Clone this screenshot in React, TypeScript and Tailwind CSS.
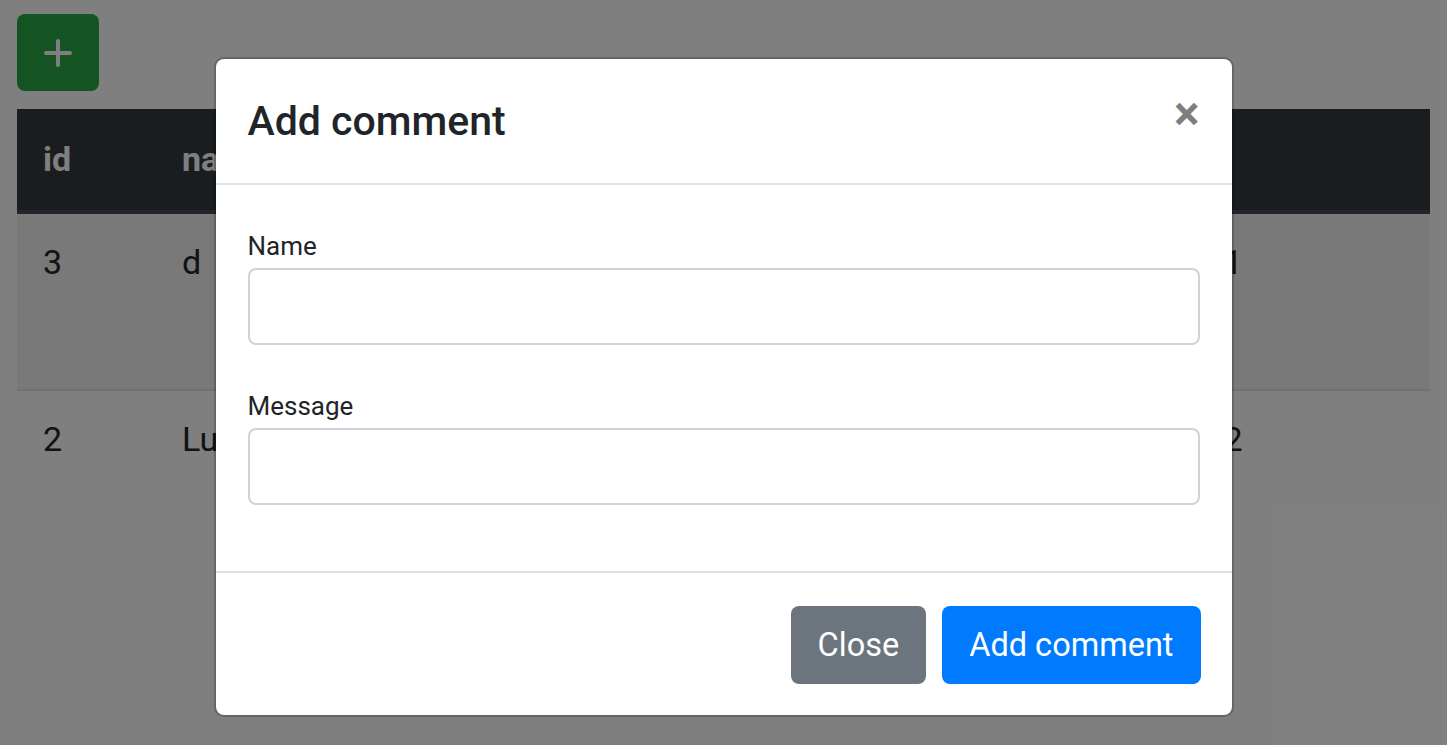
import React from "react";

const rows = [
  { id: 3, name: "d", message: "d", date: "Jan 1", striped: true },
  { id: 2, name: "Lucas", message: "hello", date: "Jan 2", striped: false },
];

export default function App() {
  return (
    <div className="relative min-h-[745px] bg-white font-['Roboto','Liberation_Sans',sans-serif] text-[#212529]">
      <div className="px-[17px] pt-[14px]">
        <button className="flex h-[77px] w-[82px] items-center justify-center rounded-[8px] bg-[#28a745]">
          <svg width="28" height="28" viewBox="0 0 28 28">
            <path d="M14 2v24M2 14h24" stroke="white" strokeWidth="4" strokeLinecap="round" fill="none" />
          </svg>
        </button>

        <table className="mt-[18px] w-full table-fixed border-collapse text-left">
          <thead>
            <tr className="bg-[#343a40] text-white">
              <th className="h-[103px] w-[139px] border-b-[4px] border-[#454d55] px-[26px] text-[34px] font-bold">id</th>
              <th className="w-[320px] border-b-[4px] border-[#454d55] px-[26px] text-[34px] font-bold">name</th>
              <th className="border-b-[4px] border-[#454d55] px-[26px] text-[34px] font-bold">message</th>
              <th className="w-[297px] border-b-[4px] border-[#454d55] px-[26px] text-[34px] font-bold">date</th>
            </tr>
          </thead>
          <tbody>
            {rows.map((r) => (
              <tr
                key={r.id}
                className={r.striped ? "h-[178px] bg-black/5" : "h-[98px] border-t-2 border-[#dee2e6]"}
              >
                <td className="px-[26px] pt-[24px] align-top text-[34px] leading-[48px]">{r.id}</td>
                <td className="px-[26px] pt-[24px] align-top text-[34px] leading-[48px]">{r.name}</td>
                <td className="px-[26px] pt-[24px] align-top text-[34px] leading-[48px]">{r.message}</td>
                <td className="whitespace-nowrap px-[26px] pt-[24px] align-top text-[34px] leading-[48px]">{r.date}</td>
              </tr>
            ))}
          </tbody>
        </table>
      </div>

      {/* modal backdrop */}
      <div className="absolute inset-0 flex justify-center bg-black/50 pt-[57px]">
        <div className="h-fit w-[1020px] rounded-[10px] border-2 border-black/20 bg-white bg-clip-padding">
          <div className="flex items-start justify-between border-b-2 border-[#dee2e6] p-[32px]">
            <h5 className="text-[41px] font-medium leading-[60px]">Add comment</h5>
            <button className="-mt-[1px] text-[48px] font-bold leading-[48px] text-black opacity-50">×</button>
          </div>

          <div className="px-[32px] pt-[39px] pb-[27px]">
            <div className="mb-[39px]">
              <label className="block text-[26px] leading-[44px]">Name</label>
              <input className="block h-[77px] w-full rounded-[8px] border-2 border-[#ced4da] px-[24px] text-[34px] outline-none" />
            </div>
            <div className="mb-[39px]">
              <label className="block text-[26px] leading-[44px]">Message</label>
              <input className="block h-[77px] w-full rounded-[8px] border-2 border-[#ced4da] px-[24px] text-[34px] outline-none" />
            </div>
          </div>

          <div className="flex items-center justify-end gap-[16px] border-t-2 border-[#dee2e6] px-[31px] pt-[33px] pb-[31px]">
            <button className="h-[78px] rounded-[8px] bg-[#6c757d] px-[27px] text-[32.5px] text-white">Close</button>
            <button className="h-[78px] rounded-[8px] bg-[#007bff] px-[27px] text-[32.5px] text-white">Add comment</button>
          </div>
        </div>
      </div>
    </div>
  );
}
